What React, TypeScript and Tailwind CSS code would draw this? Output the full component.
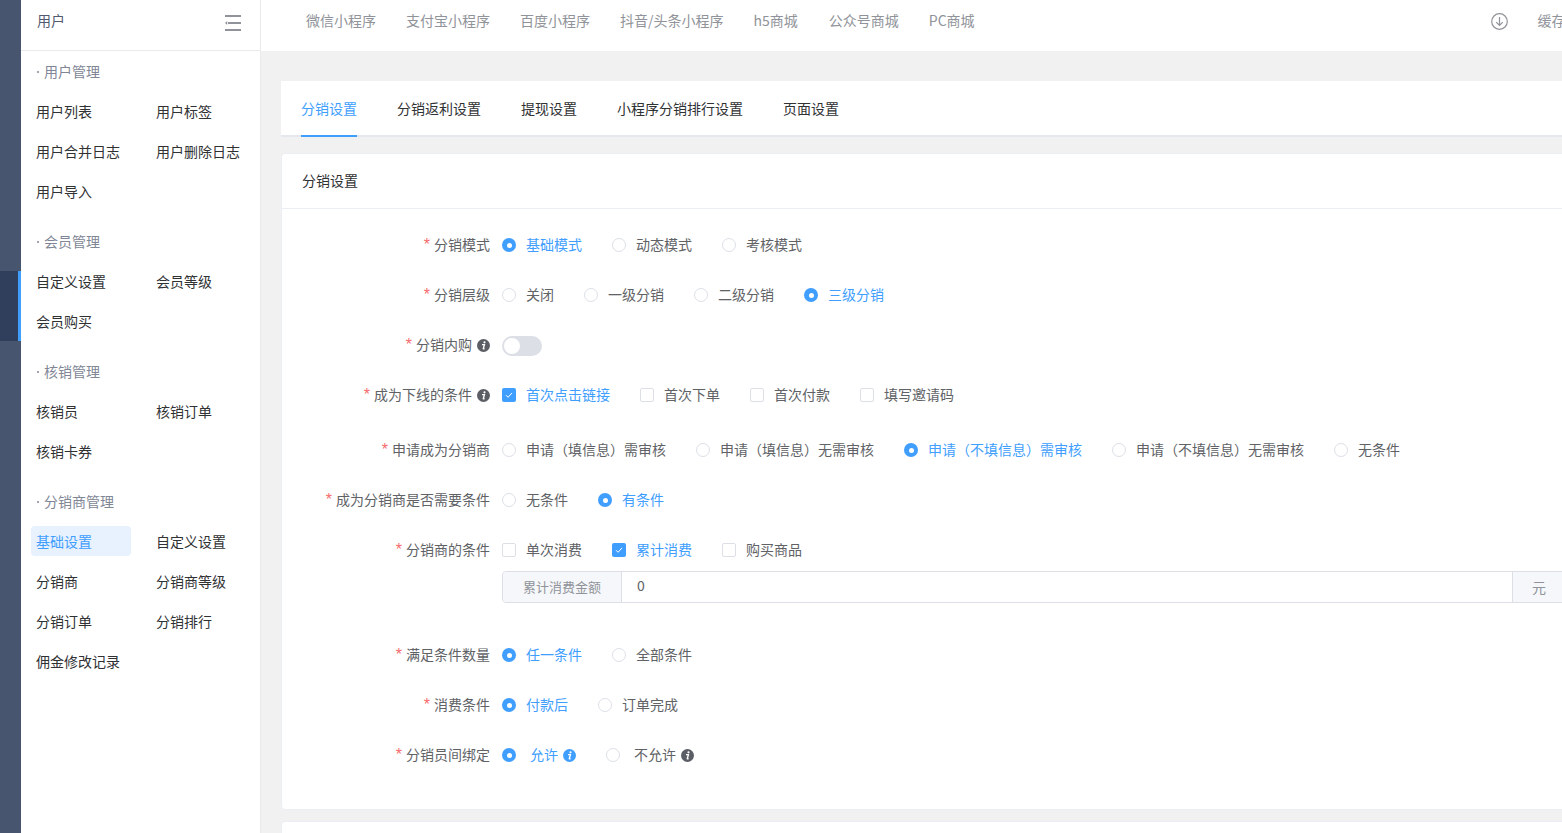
import React from "react";

const BLUE = "text-[#409eff]";

function Info({ blue = false }: { blue?: boolean }) {
  return (
    <svg width="13" height="13" viewBox="0 0 13 13" className="block shrink-0">
      <circle cx="6.5" cy="6.5" r="6.5" fill={blue ? "#409eff" : "#5c5e66"} />
      <circle cx="7.5" cy="3.3" r="1.1" fill="#fff" />
      <path d="M5 5.6h2.4L6.3 9.6c-.1.4.4.4 1.2-.2" fill="none" stroke="#fff" strokeWidth="1.4" />
    </svg>
  );
}

function Radio({ on }: { on?: boolean }) {
  return on ? (
    <span className="flex h-[14px] w-[14px] shrink-0 items-center justify-center rounded-full bg-[#409eff]">
      <span className="h-[5px] w-[5px] rounded-full bg-white" />
    </span>
  ) : (
    <span className="block h-[14px] w-[14px] shrink-0 rounded-full border border-[#dcdfe6] bg-white" />
  );
}

function Check({ on }: { on?: boolean }) {
  return on ? (
    <span className="flex h-[14px] w-[14px] shrink-0 items-center justify-center rounded-[2px] bg-[#409eff]">
      <svg width="10" height="10" viewBox="0 0 10 10">
        <path d="M2 5.2l2.1 2.1L8 2.9" fill="none" stroke="#fff" strokeWidth="1" />
      </svg>
    </span>
  ) : (
    <span className="block h-[14px] w-[14px] shrink-0 rounded-[2px] border border-[#dcdfe6] bg-white" />
  );
}

type Opt = { t: string; on?: boolean };

function Options({ items, check = false }: { items: Opt[]; check?: boolean }) {
  return (
    <div className="flex items-center gap-[30px]">
      {items.map((o) => (
        <div key={o.t} className="flex items-center gap-[10px]">
          {check ? <Check on={o.on} /> : <Radio on={o.on} />}
          <span className={`mb-[2px] ${o.on ? BLUE : "text-[#606266]"}`}>{o.t}</span>
        </div>
      ))}
    </div>
  );
}

function Row({
  label,
  info,
  className = "mb-[20px]",
  children,
}: {
  label: string;
  info?: boolean;
  className?: string;
  children: React.ReactNode;
}) {
  return (
    <div className={`flex h-[30px] items-center ${className}`}>
      <div className="flex w-[208px] shrink-0 items-center justify-end text-[#606266]">
        <span className="mr-[4px] font-['Liberation_Sans',sans-serif] text-[16px] text-[#f56c6c]">*</span>
        <span className="mb-[2px]">{label}</span>
        {info && (
          <span className="ml-[5px] block">
            <Info />
          </span>
        )}
      </div>
      <div className="ml-[12px] flex items-center">{children}</div>
    </div>
  );
}

const menu: { title: string; items: string[] }[] = [
  { title: "用户管理", items: ["用户列表", "用户标签", "用户合并日志", "用户删除日志", "用户导入"] },
  { title: "会员管理", items: ["自定义设置", "会员等级", "会员购买"] },
  { title: "核销管理", items: ["核销员", "核销订单", "核销卡券"] },
  { title: "分销商管理", items: ["基础设置", "自定义设置", "分销商", "分销商等级", "分销订单", "分销排行", "佣金修改记录"] },
];

const topNav = ["微信小程序", "支付宝小程序", "百度小程序", "抖音/头条小程序", "h5商城", "公众号商城", "PC商城"];
const tabs = ["分销设置", "分销返利设置", "提现设置", "小程序分销排行设置", "页面设置"];

export default function App() {
  return (
    <div className="flex h-[833px] w-[1562px] overflow-hidden bg-[#f1f1f1] font-['Noto_Sans_CJK_SC','Noto_Sans',sans-serif] text-[14px] leading-[20px]">
      {/* rail */}
      <div className="w-[21px] shrink-0 bg-[#47556f] pt-[271px]">
        <div className="h-[70px] border-r-[3px] border-[#409eff] bg-[#2f3f5c]" />
      </div>

      {/* side menu */}
      <div className="w-[240px] shrink-0 border-r border-[#e8eaec] bg-white">
        <div className="flex h-[51px] items-start justify-between border-b border-[#e8eaec] pl-[16px] pr-[19px] pt-[10px] text-[#515a6e]">
          <span>用户</span>
          <svg width="16" height="16" viewBox="0 0 16 16" className="mt-[5px]">
            <path d="M0 1h16M3 8h13M0 15h16" stroke="#909399" strokeWidth="2" fill="none" />
            <path d="M0 8L2.2 6v4z" fill="#909399" />
          </svg>
        </div>
        <div className="pl-[10px] pt-[6px]">
          {menu.map((s) => (
            <div key={s.title} className="pb-[11px]">
              <div className="mb-[9px] flex h-[30px] items-center pb-[2px] pl-[6px] text-[#808695]">
                <span className="mr-[5px] mt-[2px] block h-[2px] w-[2px] rounded-full bg-[#808695]" />
                <span>{s.title}</span>
              </div>
              <div className="grid w-[240px] grid-cols-[120px_120px]">
                {s.items.map((i) => {
                  const active = i === "基础设置";
                  return (
                    <div
                      key={i}
                      className={`mb-[10px] flex h-[30px] w-[100px] items-center whitespace-nowrap rounded-[4px] pl-[5px] ${
                        active ? "bg-[#e8f1fe] text-[#409eff]" : "text-[#303133]"
                      }`}
                    >
                      {i}
                    </div>
                  );
                })}
              </div>
            </div>
          ))}
        </div>
      </div>

      {/* main */}
      <div className="w-[1340px] shrink-0">
        <div className="flex h-[51px] items-start bg-white pl-[45px] pt-[10px] text-[#909399]">
          <div className="flex gap-[30px]">
            {topNav.map((t) => (
              <span key={t} className={t === "h5商城" ? "pr-[1px]" : ""}>
                {t}
              </span>
            ))}
          </div>
          <svg width="17" height="17" viewBox="0 0 17 17" className="ml-[516px] mt-[3px]">
            <circle cx="8.5" cy="8.5" r="7.8" fill="none" stroke="#909399" strokeWidth="1.2" />
            <path d="M8.5 4v8.5M5.2 9.2l3.3 3.3 3.3-3.3" fill="none" stroke="#909399" strokeWidth="1.2" />
          </svg>
          <span className="ml-[30px]">缓存</span>
        </div>

        <div className="px-[20px] pt-[30px]">
          <div className="flex h-[56px] gap-[40px] border-b-2 border-[#e4e7ed] bg-white pl-[20px]">
            {tabs.map((t, i) => (
              <div
                key={t}
                className={`-mb-[2px] flex h-[56px] items-center whitespace-nowrap ${
                  i === 0 ? "border-b-2 border-[#409eff] pb-[1px] text-[#409eff]" : "pb-[3px] text-[#303133]"
                }`}
              >
                {t}
              </div>
            ))}
          </div>

          <div className="mt-[16px] h-[657px] rounded-[4px] border border-[#ebeef5] bg-white">
            <div className="flex h-[55px] items-center border-b border-[#ebeef5] pb-[2px] pl-[20px] text-[#303133]">分销设置</div>
            <div className="pt-[21px]">
              <Row label="分销模式">
                <Options items={[{ t: "基础模式", on: true }, { t: "动态模式" }, { t: "考核模式" }]} />
              </Row>
              <Row label="分销层级">
                <Options items={[{ t: "关闭" }, { t: "一级分销" }, { t: "二级分销" }, { t: "三级分销", on: true }]} />
              </Row>
              <Row label="分销内购" info>
                <span className="mt-[2px] flex h-[20px] w-[40px] items-center rounded-full bg-[#dcdfe6] pl-[2px]">
                  <span className="block h-[16px] w-[16px] rounded-full bg-white" />
                </span>
              </Row>
              <Row label="成为下线的条件" info className="mb-[25px]">
                <Options
                  check
                  items={[{ t: "首次点击链接", on: true }, { t: "首次下单" }, { t: "首次付款" }, { t: "填写邀请码" }]}
                />
              </Row>
              <Row label="申请成为分销商">
                <Options
                  items={[
                    { t: "申请（填信息）需审核" },
                    { t: "申请（填信息）无需审核" },
                    { t: "申请（不填信息）需审核", on: true },
                    { t: "申请（不填信息）无需审核" },
                    { t: "无条件" },
                  ]}
                />
              </Row>
              <Row label="成为分销商是否需要条件">
                <Options items={[{ t: "无条件" }, { t: "有条件", on: true }]} />
              </Row>
              <Row label="分销商的条件" className="mb-[6px]">
                <Options check items={[{ t: "单次消费" }, { t: "累计消费", on: true }, { t: "购买商品" }]} />
              </Row>
              <div className="mb-[37px] ml-[220px] flex h-[32px] w-[1065px] rounded-[4px] border border-[#dcdfe6] text-[#606266]">
                <div className="flex w-[119px] items-center justify-center rounded-l-[4px] border-r border-[#dcdfe6] bg-[#f5f7fa] text-[13px] text-[#909399]">
                  累计消费金额
                </div>
                <div className="flex flex-1 items-center pb-[4px] pl-[15px]">0</div>
                <div className="flex w-[54px] items-center border-l border-[#dcdfe6] bg-[#f5f7fa] pl-[19px] text-[#909399]">
                  元
                </div>
              </div>
              <Row label="满足条件数量">
                <Options items={[{ t: "任一条件", on: true }, { t: "全部条件" }]} />
              </Row>
              <Row label="消费条件">
                <Options items={[{ t: "付款后", on: true }, { t: "订单完成" }]} />
              </Row>
              <Row label="分销员间绑定">
                <div className="flex items-center">
                  <Radio on />
                  <span className="mb-[2px] ml-[14px] text-[#409eff]">允许</span>
                  <span className="ml-[5px] block">
                    <Info blue />
                  </span>
                  <span className="ml-[30px] block">
                    <Radio />
                  </span>
                  <span className="mb-[2px] ml-[14px] text-[#606266]">不允许</span>
                  <span className="ml-[5px] block">
                    <Info />
                  </span>
                </div>
              </Row>
            </div>
          </div>

          <div className="mt-[11px] h-[60px] rounded-[4px] border border-[#ebeef5] bg-white" />
        </div>
      </div>
    </div>
  );
}
